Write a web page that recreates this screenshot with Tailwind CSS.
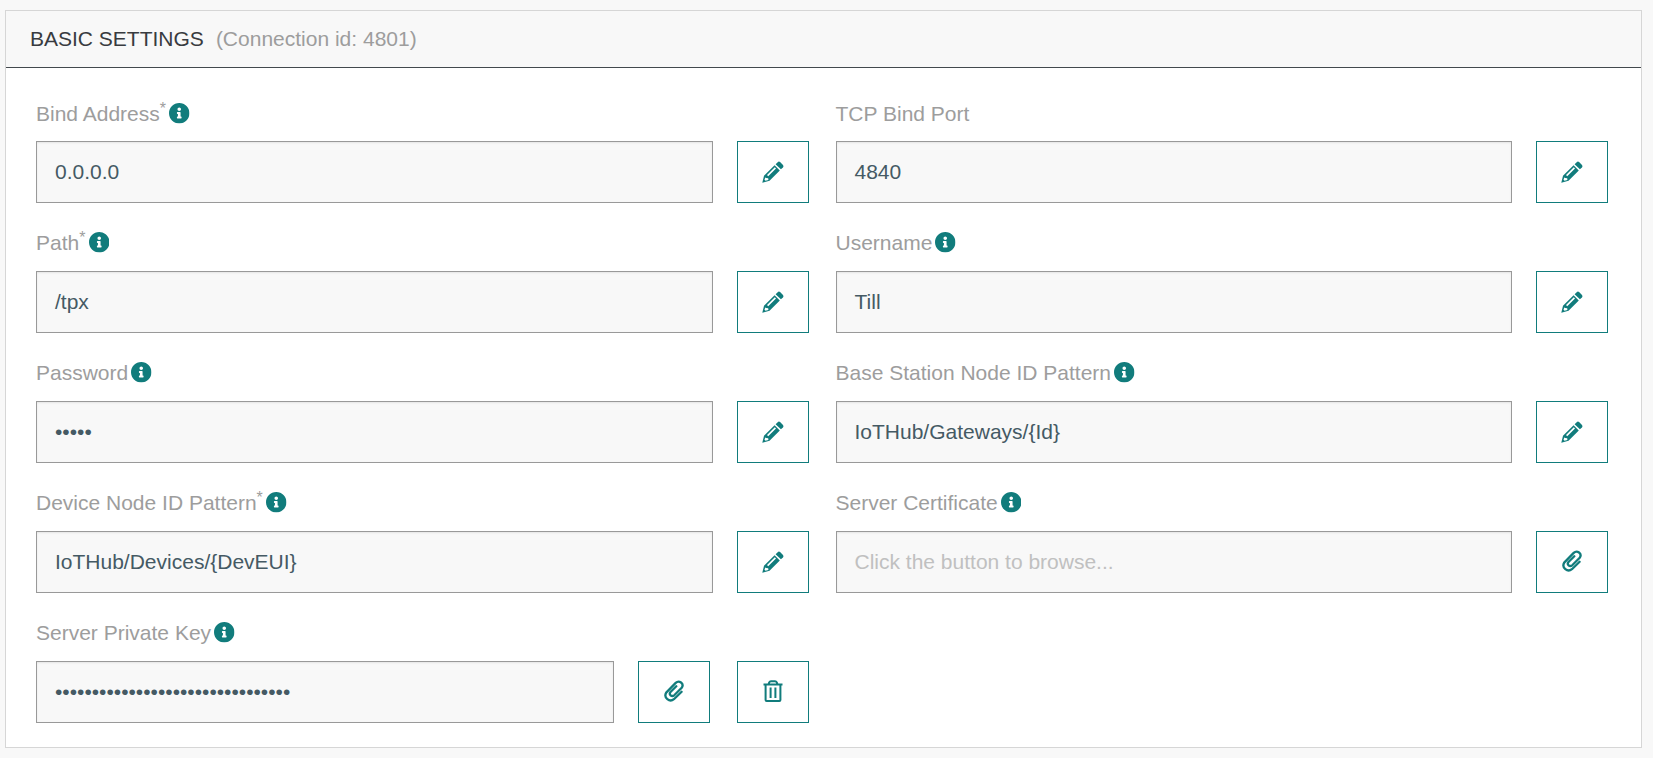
<!DOCTYPE html>
<html lang="en">
<head>
<meta charset="utf-8">
<title>Basic Settings</title>
<script src="https://cdn.jsdelivr.net/npm/@tailwindcss/browser@4"></script>
</head>
<body class="bg-[#f8f8f8] font-['Liberation_Sans',Arial,sans-serif] text-[21px] leading-6 text-[#9d9d9d]">
<svg class="hidden">
  <symbol id="info" viewBox="8 8 496 496"><path fill="currentColor" d="M256 8C119.043 8 8 119.083 8 256c0 136.997 111.043 248 248 248s248-111.003 248-248C504 119.083 392.957 8 256 8zm0 110c23.196 0 42 18.804 42 42s-18.804 42-42 42-42-18.804-42-42 18.804-42 42-42zm56 254c0 6.627-5.373 12-12 12h-88c-6.627 0-12-5.373-12-12v-24c0-6.627 5.373-12 12-12h12v-64h-12c-6.627 0-12-5.373-12-12v-24c0-6.627 5.373-12 12-12h64c6.627 0 12 5.373 12 12v100h12c6.627 0 12 5.373 12 12v24z"/></symbol>
  <symbol id="pencil" viewBox="0 0 22 22"><path fill="currentColor" fill-rule="evenodd" d="M15.700 1.200q1.200-1.100 2.400-.1l2.900 2.900q1 1.200 0 2.400L18.900 8.300 13.600 3.300ZM12.600 4.300l5.200 5.100L7.500 19.800 .3 21.700 2 14.800ZM12.800 6.300 5 14l1.200 1.200 7.800-7.700ZM3.300 16.500l-.8 2.300 1 1 2.900-.9-.2-1.700-1.900-.2Z"/></symbol>
  <symbol id="clip" viewBox="0 0 20 22"><path fill="none" stroke="currentColor" stroke-width="2.300" stroke-linecap="round" stroke-linejoin="round" d="M17.600 11.700 9.900 19.200C5.600 22.700-.7 17.900 2.200 12.600L11.700 2.900C15-.3 20.600 3.500 17.700 7.800L10.200 15.300C7.600 17.300 4.500 14.400 6.500 12L12.300 6.200"/></symbol>
  <symbol id="trash" viewBox="0 0 20 22"><path fill="none" stroke="currentColor" stroke-width="2" d="M.5 4.500h19M5.500 4.300 6.200 2.400Q6.700 1.300 8 1.300h4q1.300 0 1.800 1.100l.7 1.900M2.600 4.500v15.500q0 1 1 1h12.800q1 0 1-1V4.500M7.600 7.500v10.500M12.400 7.500v10.500"/></symbol>
</svg>
<main class="mt-2.5 ml-[5px] h-[738px] w-[1637px] border border-[#d6d6d6] bg-white">
  <header class="flex h-[57px] items-center border-b border-[#43494d] bg-[#f8f8f8] pl-6">
    <h1 class="text-[#383b40]">BASIC SETTINGS</h1><span class="ml-3">(Connection id: 4801)</span>
  </header>
  <div class="grid grid-cols-[773px_772px] gap-x-[27px] pl-[30px]" id="form"></div>
</main>
<script>
const fields = [
  ['Bind Address', 1, 1, '0.0.0.0', ['pencil']],
  ['TCP Bind Port', 0, 0, '4840', ['pencil']],
  ['Path', 1, 1, '/tpx', ['pencil']],
  ['Username', 0, 1, 'Till', ['pencil']],
  ['Password', 0, 1, '•'.repeat(5), ['pencil']],
  ['Base Station Node ID Pattern', 0, 1, 'IoTHub/Gateways/{Id}', ['pencil']],
  ['Device Node ID Pattern', 1, 1, 'IoTHub/Devices/{DevEUI}', ['pencil']],
  ['Server Certificate', 0, 1, '', ['clip']],
  ['Server Private Key', 0, 1, '•'.repeat(32), ['clip', 'trash']],
];
const size = { pencil: 'size-[22px]', clip: 'w-5 h-[22px] -translate-y-px', trash: 'w-5 h-[22px] -translate-y-px' };
document.getElementById('form').innerHTML = fields.map(([label, required, info, value, buttons], n) => `
<section class="h-[130px] ${n < 2 ? 'pt-[34px]' : 'pt-[33px]'}">
  <div class="flex h-6 items-start ${n % 2 ? '-ml-[0.5px]' : ''}"><label>${label}</label>${required ? '<span class="-mt-[5px] w-[9px] text-base leading-6">*</span>' : ''}${info ? `<svg class="${required ? 'ml-[0.5px]' : 'ml-[3px]'} mt-px size-[20.5px] text-[#117c7c]"><use href="#info"/></svg>` : ''}</div>
  <div class="${n < 2 ? 'mt-[15px]' : 'mt-4'} flex h-[62px]">
    <div class="flex min-w-0 flex-1 items-center border border-[#999] bg-[#f8f8f8] ${n % 2 ? 'pl-[17.5px]' : 'pl-[18px]'} text-[#455a64] shadow-[inset_0_1px_2px_rgba(0,0,0,0.08)]">${value || '<span class="text-[#c0c0c0]">Click the button to browse...</span>'}</div>
    ${buttons.map((b, i) => `<button class="${i ? 'ml-[27px]' : 'ml-6'} flex w-[72px] items-center justify-center border border-[#117c7c] bg-white text-[#117c7c]"><svg class="${size[b]}"><use href="#${b}"/></svg></button>`).join('')}
  </div>
</section>`).join('');
</script>
</body>
</html>
